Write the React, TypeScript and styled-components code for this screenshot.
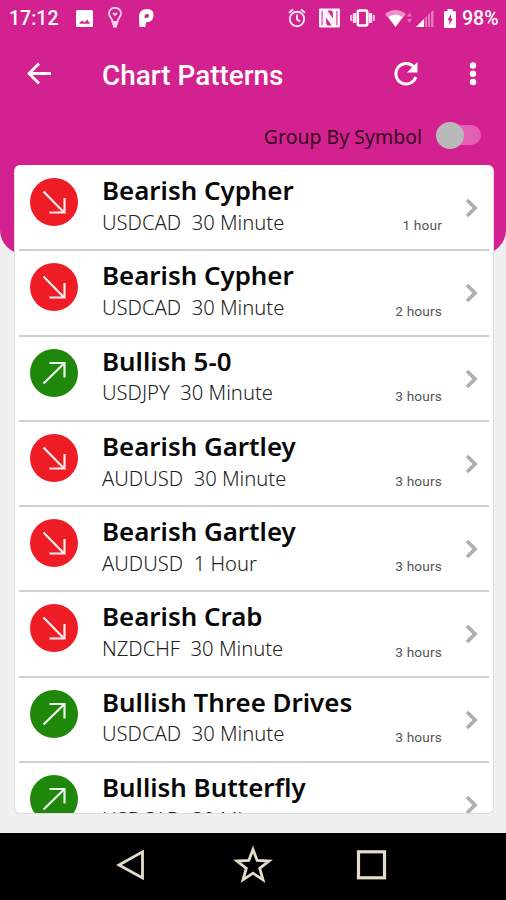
import React from "react";
import styled, { createGlobalStyle } from "styled-components";

const Global = createGlobalStyle`
  * { box-sizing: border-box; }
  html, body { margin: 0; background: #f0f0f0; }
  svg { display: block; flex: none; }
`;

const Screen = styled.div`
  width: 506px;
  height: 900px;
  display: flex;
  flex-direction: column;
  overflow: hidden;
  background: #f0f0f0;
  font-family: "Noto Sans", "Open Sans", sans-serif;
`;

const Header = styled.header`
  height: 254px;
  flex: none;
  background: #d3228f;
  border-radius: 0 0 24px 24px;
  color: #fff;
`;

const StatusBar = styled.div`
  height: 36px;
  padding: 0 7px 0 9px;
  display: flex;
  align-items: center;
  justify-content: space-between;
  font: 500 19.5px/36px Roboto, sans-serif;
`;

const StatusGroup = styled.div<{ $gap: number }>`
  display: flex;
  align-items: center;
  gap: ${(p) => p.$gap}px;
`;

const Clock = styled.span`
  width: 52px;
  padding-top: 1px;
  white-space: nowrap;
`;

const Battery = styled.span`
  width: 37px;
  margin-left: -4px;
  padding-top: 1px;
  white-space: nowrap;
`;

const AlarmIcon = styled.svg`
  margin-right: 3px;
`;

const WifiIcon = styled.svg`
  margin-right: -7px;
`;

const ParkingIcon = styled.svg`
  margin-left: 2px;
`;

const AppBar = styled.div`
  height: 76px;
  padding: 0 29px 0 26px;
  display: flex;
  align-items: center;
`;

const Title = styled.h1`
  margin: 3px 0 0 50px;
  flex: 1;
  font: 500 27.9px/36px Roboto, sans-serif;
  white-space: nowrap;
`;

const Actions = styled.div`
  display: flex;
  align-items: center;
  gap: 51px;
`;

const ToggleRow = styled.div`
  height: 46px;
  padding-right: 25px;
  display: flex;
  align-items: center;
  justify-content: flex-end;
  gap: 14px;
  color: #33081f;
  font-size: 19.5px;
  font-weight: 400;
`;

const ToggleLabel = styled.span`
  padding-top: 3px;
  white-space: nowrap;
`;

const Track = styled.span`
  width: 45px;
  height: 20px;
  border-radius: 10px;
  background: #e25fb2;
  display: flex;
  align-items: center;
`;

const Thumb = styled.span`
  width: 28px;
  height: 27px;
  flex: none;
  border-radius: 50%;
  background: #b9b9b9;
`;

const Card = styled.main`
  width: 480px;
  height: 649px;
  flex: none;
  margin: -89px 0 0 14px;
  background: #fff;
  border: 1px solid #dcdcdc;
  border-top-color: #fff;
  border-radius: 6px;
  overflow: hidden;
  padding: 0 4px;
`;

const Row = styled.article`
  height: 85.3px;
  border-bottom: 2px solid #cfcfcf;
  display: flex;
  padding: 12px 11px 0 11px;
`;

const Badge = styled.div<{ $up: boolean }>`
  width: 48px;
  height: 48px;
  flex: none;
  border-radius: 50%;
  background: ${(p) => (p.$up ? "#1f8709" : "#ee1c25")};
`;

const Info = styled.div`
  flex: 1;
  padding-left: 24px;
  white-space: nowrap;
`;

const Name = styled.h2`
  margin: -5px 0 0;
  font-size: 25.9px;
  line-height: 34px;
  font-weight: 600;
  color: #080808;
`;

const Detail = styled.p`
  margin: 0.7px 0 0;
  font-size: 20.2px;
  line-height: 28px;
  font-weight: 300;
  color: #222;
  white-space: pre;
`;

const Age = styled.time`
  align-self: flex-end;
  margin: 0 23px 14px 0;
  font: 400 13.7px/20px Roboto, sans-serif;
  letter-spacing: 0.15px;
  color: #555;
  white-space: nowrap;
`;

const Chevron = styled.svg`
  margin-top: 20px;
`;

const NavBar = styled.nav`
  height: 67px;
  margin-top: auto;
  flex: none;
  background: #000;
  display: flex;
  justify-content: center;
  align-items: center;
  gap: 79px;
  padding: 0 0 4px 0;
`;

const Arrow = ({ up }: { up: boolean }) => (
  <svg width="48" height="48" fill="none" stroke="#fff" strokeOpacity=".92" strokeWidth="2.2">
    {up ? <path d="M13.5 34.5 34 14.5M19.5 14H34.5V28.5" /> : <path d="M13.5 13.5 34 34.5M19.5 34.5H34.5V20" />}
  </svg>
);

const signals = [
  { name: "Bearish Cypher", pair: "USDCAD", span: "30 Minute", age: "1 hour" },
  { name: "Bearish Cypher", pair: "USDCAD", span: "30 Minute", age: "2 hours" },
  { name: "Bullish 5-0", pair: "USDJPY", span: "30 Minute", age: "3 hours" },
  { name: "Bearish Gartley", pair: "AUDUSD", span: "30 Minute", age: "3 hours" },
  { name: "Bearish Gartley", pair: "AUDUSD", span: "1 Hour", age: "3 hours" },
  { name: "Bearish Crab", pair: "NZDCHF", span: "30 Minute", age: "3 hours" },
  { name: "Bullish Three Drives", pair: "USDCAD", span: "30 Minute", age: "3 hours" },
  { name: "Bullish Butterfly", pair: "USDCAD", span: "30 Minute", age: "" },
];

const NotificationIcons = () => (
  <>
    <svg width="17" height="17" viewBox="0 0 17 17">
      <path fill="#fff" fillRule="evenodd" d="M1.5 0H15.5Q17 0 17 1.5V15.5Q17 17 15.5 17H1.5Q0 17 0 15.5V1.5Q0 0 1.5 0ZM3 13.8H14L11.2 9.5 8.5 12.5 6 10.5Z" />
    </svg>
    <svg width="14" height="22" viewBox="0 0 14 22" fill="none" stroke="#fbd3ea" strokeWidth="1.8">
      <path d="M4.5 15C4.5 11 1 10 1 6.5A6 5.7 0 0 1 13 6.5C13 10 9.5 11 9.5 15ZM5 6 7 8 9 6" />
      <path d="M4.2 16.8H9.8M5 19.3H9" strokeWidth="2.5" />
    </svg>
    <ParkingIcon width="16" height="18" viewBox="0 0 16 18">
      <path fill="#fff" fillRule="evenodd" d="M0 7.5C0 3 3 0 8 0S15 3 14.5 7 11.5 13.5 7 13.2L6.3 18H.5ZM5.6 9H7.5C9 9 9.9 8.2 9.9 6.8S9.2 5 8 5 5.8 5.8 5.8 7Z" />
    </ParkingIcon>
  </>
);

const SystemIcons = () => (
  <>
    <AlarmIcon width="18" height="20" viewBox="0 0 18 20" fill="none" stroke="#ffe5f5" strokeWidth="1.9">
      <circle cx="9" cy="11" r="7.2" />
      <path d="M9 6.5V11.3L12 13.5M1 4.8 5 1.5M17 4.8 13 1.5" />
    </AlarmIcon>
    <svg width="21" height="20" viewBox="0 0 21 20">
      <path
        fill="#fff"
        fillOpacity=".95"
        fillRule="evenodd"
        d="M1 .5H20Q21 .5 21 1.5V18.5Q21 19.5 20 19.5H1Q0 19.5 0 18.5V1.5Q0 .5 1 .5ZM2.6 3V17H3.6V3ZM17.4 3V17H18.4V3ZM7.2 9.5V15.5L8.6 17.6H12.6ZM8.6 2.4 13.8 10.5V4.5L12.4 2.4Z"
      />
    </svg>
    <svg width="25" height="18" viewBox="0 0 25 18">
      <rect x="7.8" y="1.5" width="9.4" height="15" rx="1.5" fill="none" stroke="#fff" strokeWidth="2.6" />
      <path d="M4.6 4V14M20.4 4V14" stroke="#ffe0f2" strokeWidth="3.4" />
      <path d="M1.2 6V12M23.8 6V12" stroke="#f9b9dd" strokeWidth="2.2" />
    </svg>
    <WifiIcon width="28" height="19" viewBox="0 0 28 19">
      <path d="M0 5Q10 -3 21 5L10.5 18Z" fill="#ec91ca" />
      <path d="M3.5 8Q10.5 3 17.5 8L10.5 18Z" fill="#fff" />
      <path d="M22 7.5 24.5 3.5 27 7.5ZM22 10 24.5 14 27 10Z" fill="#e56dba" />
    </WifiIcon>
    <svg width="18" height="19" viewBox="0 0 18 19">
      <path d="M0 18 8 10V18Z" fill="#fff" />
      <path d="M8.8 18V9L11 7V18ZM12 18V6L14 4V18ZM15 18V3L17.5 1V18Z" fill="#e878c0" />
    </svg>
    <svg width="12" height="19" viewBox="0 0 12 19">
      <path fill="#fff" fillRule="evenodd" d="M3.5 0H8.5V2H10.5Q12 2 12 3.5V17.5Q12 19 10.5 19H1.5Q0 19 0 17.5V3.5Q0 2 1.5 2H3.5ZM7 5 3.5 11.3H5.3V16L8.7 9.7H7Z" />
    </svg>
  </>
);

export default function App() {
  return (
    <Screen>
      <Global />
      <Header>
        <StatusBar>
          <StatusGroup $gap={15}>
            <Clock>17:12</Clock>
            <NotificationIcons />
          </StatusGroup>
          <StatusGroup $gap={10}>
            <SystemIcons />
            <Battery>98%</Battery>
          </StatusGroup>
        </StatusBar>
        <AppBar>
          <svg width="26" height="24" viewBox="0 0 26 24" fill="none" stroke="#fff" strokeWidth="2.8">
            <path d="M25 11.5H3M13 1.5 3 11.5 13 21.5" />
          </svg>
          <Title>Chart Patterns</Title>
          <Actions>
            <svg width="24" height="24" viewBox="0 0 24 24">
              <path d="M20.2 5.5A10.2 10.2 0 1 0 21.8 15" fill="none" stroke="#fff" strokeWidth="3" />
              <path d="M23.5 0V10.5H13Z" fill="#fff" />
            </svg>
            <svg width="8" height="24" viewBox="0 0 8 24" fill="#fff">
              <circle cx="4" cy="3.5" r="3.2" />
              <circle cx="4" cy="11.7" r="3.2" />
              <circle cx="4" cy="20" r="3.2" />
            </svg>
          </Actions>
        </AppBar>
        <ToggleRow>
          <ToggleLabel>Group By Symbol</ToggleLabel>
          <Track>
            <Thumb />
          </Track>
        </ToggleRow>
      </Header>
      <Card>
        {signals.map((s, i) => {
          const up = s.name.startsWith("Bullish");
          return (
            <Row key={i}>
              <Badge $up={up}>
                <Arrow up={up} />
              </Badge>
              <Info>
                <Name>{s.name}</Name>
                <Detail>{`${s.pair}  ${s.span}`}</Detail>
              </Info>
              <Age>{s.age}</Age>
              <Chevron width="13" height="20" viewBox="0 0 13 20" fill="none" stroke="#b0b0b0" strokeWidth="3.8">
                <path d="M2 2 10 10 2 18" />
              </Chevron>
            </Row>
          );
        })}
      </Card>
      <NavBar>
        <svg width="40" height="40" viewBox="0 0 40 40" fill="none" stroke="#e6dccb" strokeWidth="2.8">
          <path d="M28.5 6.8V33L5 20Z" />
        </svg>
        <svg width="40" height="40" viewBox="0 0 40 40" fill="none" stroke="#e6dccb" strokeWidth="2.8">
          <path d="M20 4.5 24.2 15.5 36 16 26.7 23.3 30 34.8 20 28.2 10 34.8 13.3 23.3 4 16 15.8 15.5Z" />
        </svg>
        <svg width="40" height="40" viewBox="0 0 40 40" fill="none" stroke="#e6dccb" strokeWidth="3.2">
          <rect x="6.5" y="6.8" width="26" height="26" />
        </svg>
      </NavBar>
    </Screen>
  );
}
